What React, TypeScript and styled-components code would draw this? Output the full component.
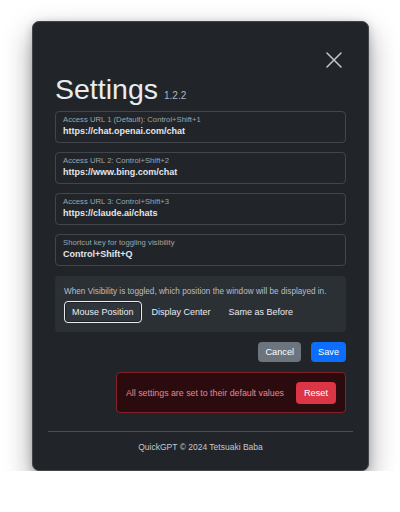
import React, { useState } from "react";
import styled, { createGlobalStyle } from "styled-components";

const GlobalStyle = createGlobalStyle`
    html, body {
        margin: 0;
        padding: 0;
        background: #ffffff;
        font-family: "Liberation Sans", Arial, sans-serif;
    }
`;

const Window = styled.div`
    box-sizing: border-box;
    width: 337px;
    height: 450px;
    margin: 21px 0 0 32px;
    background: #212529;
    border: 1px solid #3f454b;
    border-radius: 7px;
    box-shadow: 0 12px 28px rgba(0, 0, 0, 0.38), 0 2px 8px rgba(0, 0, 0, 0.2);
    padding: 0 22px;
    display: flex;
    flex-direction: column;
    color: #dee2e6;
`;

const CloseRow = styled.div`
    display: flex;
    justify-content: flex-end;
    padding-top: 30px;
    padding-right: 4px;
    height: 18px;
`;

const CloseButton = styled.button`
    background: none;
    border: none;
    padding: 0;
    width: 16px;
    height: 16px;
    cursor: pointer;
    display: flex;
    align-items: center;
    justify-content: center;
`;

const Title = styled.h1`
    margin: 4px 0 7px 0;
    font-size: 28.5px;
    font-weight: 400;
    color: #e9ecef;
    line-height: 30px;
    height: 30px;
    white-space: nowrap;
`;

const Version = styled.span`
    font-size: 10px;
    color: #adb5bd;
    margin-left: 6px;
`;

const Fields = styled.div`
    display: flex;
    flex-direction: column;
    gap: 9px;
`;

const Field = styled.div`
    box-sizing: border-box;
    height: 32px;
    border: 1px solid #41464c;
    border-radius: 4px;
    padding: 3px 7px 0 7px;
    display: flex;
    flex-direction: column;
`;

const FieldLabel = styled.label`
    font-size: 7.7px;
    color: #9ea4aa;
    line-height: 10px;
    white-space: nowrap;
`;

const FieldValue = styled.div`
    font-size: 9px;
    font-weight: 600;
    color: #e3e6e9;
    line-height: 13px;
    white-space: nowrap;
`;

const PositionPanel = styled.div`
    box-sizing: border-box;
    margin-top: 10px;
    height: 56px;
    background: #2b3035;
    border-radius: 4px;
    padding: 11px 9px 0 9px;
`;

const PanelText = styled.div`
    font-size: 8.2px;
    color: #b9bec3;
    line-height: 10px;
    white-space: nowrap;
`;

const OptionRow = styled.div`
    display: flex;
    gap: 2px;
    margin-top: 4px;
`;

const Option = styled.button<{ $active?: boolean }>`
    box-sizing: border-box;
    height: 22px;
    padding: 0 7px;
    font-family: inherit;
    font-size: 9px;
    color: #e9ecef;
    border-radius: 4px;
    border: 1px solid ${({ $active }) => ($active ? "#e9ecef" : "transparent")};
    box-shadow: ${({ $active }) => ($active ? "inset 0 0 0 1px #1d2024" : "none")};
    background: ${({ $active }) => ($active ? "#2f353a" : "transparent")};
    cursor: pointer;
`;

const ActionRow = styled.div`
    display: flex;
    justify-content: flex-end;
    gap: 10px;
    margin-top: 10px;
`;

const ActionButton = styled.button<{ $variant: "secondary" | "primary" | "danger" }>`
    height: 20px;
    padding: 0 7px;
    border: none;
    border-radius: 4px;
    font-family: inherit;
    font-size: 9.2px;
    color: #fff;
    background: ${({ $variant }) =>
        $variant === "primary" ? "#0d6efd" : $variant === "danger" ? "#dc3545" : "#6c757d"};
    cursor: pointer;
`;

const Alert = styled.div`
    box-sizing: border-box;
    align-self: flex-end;
    width: 230px;
    height: 41px;
    margin-top: 10px;
    background: #2c0b0e;
    border: 1px solid #842029;
    border-radius: 4px;
    display: flex;
    align-items: center;
    justify-content: space-between;
    padding: 0 9px;
    color: #ea868f;
    font-size: 8.8px;
    white-space: nowrap;
`;

const ResetButton = styled(ActionButton)`
    height: 22px;
    padding: 0 8px;
`;

const Divider = styled.hr`
    margin: 18px -7px 0 -7px;
    border: none;
    border-top: 1px solid #4a4f55;
`;

const Footer = styled.footer`
    text-align: center;
    font-size: 8.5px;
    color: #c4c8cc;
    margin-top: 10px;
`;

const fields = [
    { label: "Access URL 1 (Default): Control+Shift+1", value: "https://chat.openai.com/chat" },
    { label: "Access URL 2: Control+Shift+2", value: "https://www.bing.com/chat" },
    { label: "Access URL 3: Control+Shift+3", value: "https://claude.ai/chats" },
    { label: "Shortcut key for toggling visibility", value: "Control+Shift+Q" },
];

const options = ["Mouse Position", "Display Center", "Same as Before"];

const App: React.FC = () => {
    const [position, setPosition] = useState("Mouse Position");

    return (
        <>
            <GlobalStyle />
            <Window>
                <CloseRow>
                    <CloseButton aria-label="Close">
                        <svg width="16" height="16" viewBox="0 0 16 16">
                            <path d="M1 1L15 15M15 1L1 15" stroke="#c3c7cb" strokeWidth="1.5" strokeLinecap="round" />
                        </svg>
                    </CloseButton>
                </CloseRow>
                <Title>
                    Settings<Version>1.2.2</Version>
                </Title>
                <Fields>
                    {fields.map((f) => (
                        <Field key={f.label}>
                            <FieldLabel>{f.label}</FieldLabel>
                            <FieldValue>{f.value}</FieldValue>
                        </Field>
                    ))}
                </Fields>
                <PositionPanel>
                    <PanelText>When Visibility is toggled, which position the window will be displayed in.</PanelText>
                    <OptionRow>
                        {options.map((o) => (
                            <Option key={o} $active={o === position} onClick={() => setPosition(o)}>
                                {o}
                            </Option>
                        ))}
                    </OptionRow>
                </PositionPanel>
                <ActionRow>
                    <ActionButton $variant="secondary">Cancel</ActionButton>
                    <ActionButton $variant="primary">Save</ActionButton>
                </ActionRow>
                <Alert>
                    <span>All settings are set to their default values</span>
                    <ResetButton $variant="danger">Reset</ResetButton>
                </Alert>
                <Divider />
                <Footer>QuickGPT © 2024 Tetsuaki Baba</Footer>
            </Window>
        </>
    );
};

export default App;
